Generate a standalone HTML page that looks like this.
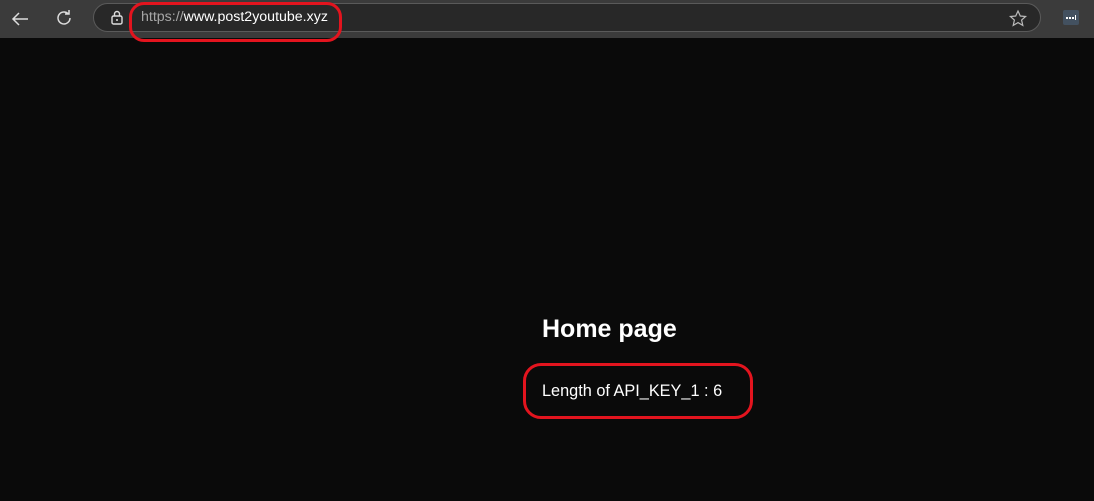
<!DOCTYPE html>
<html><head><style>
body{margin:0;width:1094px;height:501px;background:#0a0a0a;overflow:hidden;font-family:"Liberation Sans",sans-serif;position:relative}
.bar{position:absolute;left:0;top:0;width:1094px;height:38px;background:#3b3b3b}
.url{position:absolute;left:93px;top:3px;width:948px;height:29px;border:1px solid #5a5a5a;border-radius:16px;background:#282828;box-sizing:border-box}
.txt{position:absolute;left:141px;top:9px;font-size:14.2px;color:#fff}
.txt span{color:#a6a6a6}
.red{position:absolute;border:3px solid #e3141e;border-radius:14px}
h1{position:absolute;left:542px;top:315px;margin:0;font-size:25px;color:#fff;font-weight:bold}
.p{position:absolute;left:542px;top:382px;font-size:16.3px;color:#fff}
</style></head><body>
<div class="bar"></div>
<svg style="position:absolute;left:10px;top:9px" width="20" height="20"><path d="M18 10H3M9 4L3 10l6 6" stroke="#ddd" stroke-width="1.5" fill="none"/></svg>
<svg style="position:absolute;left:54px;top:8px" width="20" height="20"><path d="M16 10a6 6 0 1 1-2-4.5M15 2v4h-4" stroke="#ddd" stroke-width="1.5" fill="none"/></svg>
<div class="url"></div>
<svg style="position:absolute;left:110px;top:10px" width="14" height="16"><rect x="2" y="6" width="10" height="8" rx="1.5" stroke="#ddd" stroke-width="1.4" fill="none"/><path d="M4.5 6V4a2.5 2.5 0 0 1 5 0v2" stroke="#ddd" stroke-width="1.4" fill="none"/><circle cx="7" cy="10" r="1" fill="#ddd"/></svg>
<div class="txt"><span>https://</span>www.post2youtube.xyz</div>
<svg style="position:absolute;left:1008px;top:9px" width="20" height="20"><path d="M10 2l2.3 5 5.3.5-4 3.6 1.2 5.3L10 13.6 5.2 16.4l1.2-5.3-4-3.6 5.3-.5z" stroke="#bbb" stroke-width="1.2" fill="none"/></svg>
<svg style="position:absolute;left:1063px;top:10px" width="16" height="15"><rect width="16" height="15" rx="2" fill="#435160"/><rect x="3" y="7" width="2" height="2" fill="#fff"/><rect x="6" y="7" width="2" height="2" fill="#fff"/><rect x="9" y="7" width="2" height="2" fill="#fff"/><rect x="12" y="5" width="1" height="5" fill="#fff"/></svg>
<div class="red" style="left:129px;top:2px;width:207px;height:34px;border-radius:15px"></div>
<h1>Home page</h1>
<div class="p">Length of API_KEY_1 : 6</div>
<div class="red" style="left:523px;top:363px;width:224px;height:50px;border-radius:18px"></div>
</body></html>
